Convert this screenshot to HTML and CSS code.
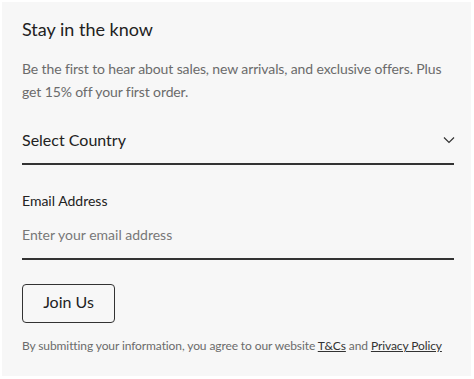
FILE: index.html
```html
<!DOCTYPE html>
<html lang="en">
<head>
    <meta charset="UTF-8">
    <meta name="viewport" content="width=device-width, initial-scale=1.0">
    <title>Newsletter</title>
    <link rel="stylesheet" href="styles.css">
</head>
<body>
    <div class="signup">
        <h2 class="signup-title">Stay in the know</h2>
        <p class="signup-intro">Be the first to hear about sales, new arrivals, and exclusive offers. Plus get 15% off your first order.</p>

        <form class="signup-form">
            <div class="select-field">
                <span>Select Country</span>
                <svg class="chevron" width="12" height="8" viewBox="0 0 12 8">
                    <path d="M1 1.5 L6 6.5 L11 1.5" fill="none" stroke="#333" stroke-width="1.2"/>
                </svg>
            </div>

            <div class="input-field">
                <label for="email">Email Address</label>
                <input type="email" id="email" placeholder="Enter your email address">
            </div>

            <button type="button" class="btn">Join Us</button>
        </form>

        <p class="legal">By submitting your information, you agree to our website <a href="#">T&amp;Cs</a> and <a href="#">Privacy Policy</a></p>
    </div>
</body>
</html>
```

FILE: styles.css
```css
* {
    margin: 0;
    padding: 0;
    box-sizing: border-box;
}

body {
    font-family: Lato, "Liberation Sans", sans-serif;
    background: #fff;
    padding: 2px 3px 3px 2px;
}

.signup {
    background: #f7f7f7;
    height: 374px;
    padding: 15px 17px 0 20px;
    color: #222;
}

.signup-title {
    font-size: 18px;
    font-weight: 400;
    line-height: 24px;
    margin-bottom: 16px;
}

.signup-intro {
    font-size: 14px;
    line-height: 23px;
    letter-spacing: -0.12px;
    color: #6b6b6b;
    margin-bottom: 17px;
}

.select-field {
    display: flex;
    align-items: center;
    justify-content: space-between;
    height: 45px;
    border-bottom: 2px solid #333;
    font-size: 16px;
    padding-bottom: 5px;
}

.chevron {
    margin-right: -1px;
    margin-top: 2px;
}

.input-field {
    margin-top: 26px;
}

.input-field label {
    display: block;
    font-size: 14px;
    line-height: 20px;
    margin-bottom: 13px;
}

.input-field input {
    width: 100%;
    border: none;
    border-bottom: 2px solid #333;
    background: transparent;
    font-family: inherit;
    font-size: 14px;
    padding: 0 0 15px;
    outline: none;
}

.input-field input::placeholder {
    color: #777;
}

.btn {
    margin-top: 24px;
    width: 93px;
    height: 39px;
    padding-bottom: 4px;
    border: 1.5px solid #333;
    border-radius: 4px;
    background: transparent;
    font-family: inherit;
    font-size: 16px;
    color: #222;
    cursor: pointer;
}

.legal {
    margin-top: 15px;
    font-size: 12px;
    letter-spacing: -0.1px;
    color: #6b6b6b;
}

.legal a {
    color: #333;
}
```
